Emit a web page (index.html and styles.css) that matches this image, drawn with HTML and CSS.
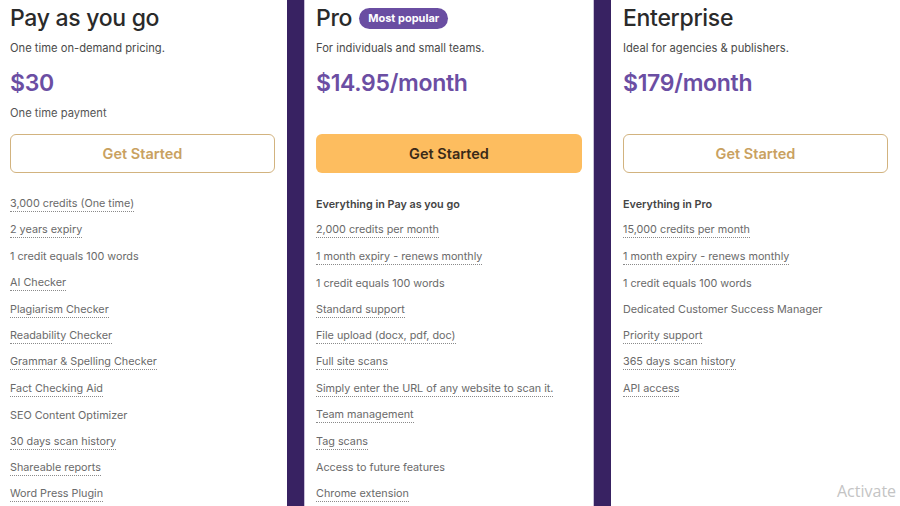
FILE: index.html
```html
<!DOCTYPE html>
<html>
<head>
<meta charset="utf-8">
<link rel="stylesheet" href="styles.css">
</head>
<body>
<div class="plans">
  <section class="plan plan-first">
    <h2 class="title">Pay as you go</h2>
    <p class="sub">One time on-demand pricing.</p>
    <div class="price">$30</div>
    <p class="note">One time payment</p>
    <a class="btn btn-outline">Get Started</a>
    <ul class="features">
      <li><span class="dot">3,000 credits (One time)</span></li>
      <li><span class="dot">2 years expiry</span></li>
      <li><span>1 credit equals 100 words</span></li>
      <li><span class="dot">AI Checker</span></li>
      <li><span class="dot">Plagiarism Checker</span></li>
      <li><span class="dot">Readability Checker</span></li>
      <li><span class="dot">Grammar &amp; Spelling Checker</span></li>
      <li><span class="dot">Fact Checking Aid</span></li>
      <li><span>SEO Content Optimizer</span></li>
      <li><span class="dot">30 days scan history</span></li>
      <li><span class="dot">Shareable reports</span></li>
      <li><span class="dot">Word Press Plugin</span></li>
    </ul>
  </section>
  <section class="plan plan-pro">
    <h2 class="title">Pro <span class="badge">Most popular</span></h2>
    <p class="sub">For individuals and small teams.</p>
    <div class="price">$14.95/month</div>
    <p class="note">&nbsp;</p>
    <a class="btn btn-fill">Get Started</a>
    <ul class="features">
      <li><span class="lead">Everything in Pay as you go</span></li>
      <li><span class="dot">2,000 credits per month</span></li>
      <li><span class="dot">1 month expiry - renews monthly</span></li>
      <li><span>1 credit equals 100 words</span></li>
      <li><span class="dot">Standard support</span></li>
      <li><span class="dot">File upload (docx, pdf, doc)</span></li>
      <li><span class="dot">Full site scans</span></li>
      <li><span class="dot">Simply enter the URL of any website to scan it.</span></li>
      <li><span class="dot">Team management</span></li>
      <li><span class="dot">Tag scans</span></li>
      <li><span>Access to future features</span></li>
      <li><span class="dot">Chrome extension</span></li>
    </ul>
  </section>
  <section class="plan plan-ent">
    <h2 class="title">Enterprise</h2>
    <p class="sub">Ideal for agencies &amp; publishers.</p>
    <div class="price">$179/month</div>
    <p class="note">&nbsp;</p>
    <a class="btn btn-outline">Get Started</a>
    <ul class="features">
      <li><span class="lead">Everything in Pro</span></li>
      <li><span class="dot">15,000 credits per month</span></li>
      <li><span class="dot">1 month expiry - renews monthly</span></li>
      <li><span>1 credit equals 100 words</span></li>
      <li><span>Dedicated Customer Success Manager</span></li>
      <li><span class="dot">Priority support</span></li>
      <li><span class="dot">365 days scan history</span></li>
      <li><span class="dot">API access</span></li>
    </ul>
  </section>
</div>
<div class="watermark">Activate</div>
</body>
</html>
```

FILE: styles.css
```css
html, body {
  margin: 0;
  padding: 0;
  width: 900px;
  height: 506px;
  overflow: hidden;
  background: #ffffff;
  font-family: "Inter", "Noto Sans", sans-serif;
}

.plans {
  display: flex;
  align-items: stretch;
  height: 506px;
}

.plan {
  box-sizing: border-box;
  padding: 0 12px;
  background: #ffffff;
}

.plan-first {
  width: 287px;
  padding-left: 10px;
}

.plan-pro {
  width: 324px;
  border-left: 17px solid #382262;
  border-right: 17px solid #382262;
  box-shadow: inset 1px 0 0 #c9c0d8, inset -1px 0 0 #c9c0d8;
}

.plan-ent {
  width: 289px;
}

.title {
  margin: 0;
  height: 36px;
  line-height: 36px;
  font-size: 23px;
  font-weight: 500;
  color: #2a2a2a;
  display: flex;
  align-items: center;
  gap: 7px;
  letter-spacing: -0.3px;
}

.badge {
  display: inline-block;
  background: #6a4ea2;
  color: #ffffff;
  font-size: 11px;
  font-weight: 700;
  line-height: 21px;
  height: 21px;
  padding: 0 9px;
  border-radius: 11px;
  letter-spacing: 0;
}

.sub {
  margin: 3px 0 0;
  font-size: 11.2px;
  line-height: 18px;
  color: #4a4a4a;
}

.price {
  margin-top: 11px;
  font-size: 23px;
  font-weight: 600;
  line-height: 30px;
  color: #6b4ea3;
  letter-spacing: -0.3px;
}

.note {
  margin: 7px 0 0;
  font-size: 11.2px;
  line-height: 16px;
  color: #555555;
}

.btn {
  display: flex;
  align-items: center;
  justify-content: center;
  box-sizing: border-box;
  margin-top: 13px;
  height: 39px;
  border-radius: 6px;
  font-size: 14.5px;
  font-weight: 600;
}

.btn-outline {
  border: 1px solid #d2b37f;
  color: #c9a160;
}

.btn-fill {
  background: #fdbd5f;
  color: #3a2a18;
}

.features {
  list-style: none;
  margin: 18px 0 0;
  padding: 0;
}

.features li {
  height: 26.4px;
  line-height: 26.4px;
  font-size: 10.8px;
  color: #6a6a6a;
}

.features li span {
  display: inline-block;
  line-height: 15px;
  vertical-align: middle;
}

.features .dot {
  border-bottom: 1px dotted #8a8a8a;
}

.features .lead {
  font-weight: 600;
  color: #444444;
}

.watermark {
  position: absolute;
  left: 837px;
  top: 480px;
  font-family: "Open Sans", "Noto Sans", sans-serif;
  font-size: 16px;
  color: #c4c4c4;
  white-space: nowrap;
}
```
